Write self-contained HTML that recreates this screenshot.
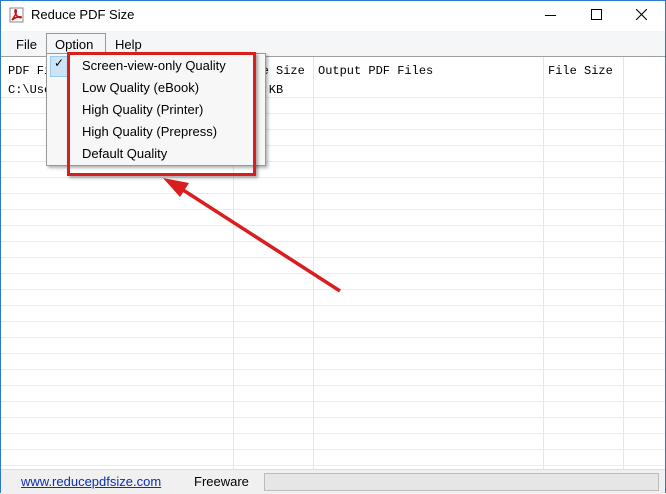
<!DOCTYPE html><html><head><style>
body{margin:0;width:666px;height:493px;overflow:hidden;background:#fff;font-family:"Liberation Sans",sans-serif;position:relative}
.a{position:absolute}
.mono{font-family:"Liberation Mono",monospace;font-size:12px;color:#000}
.menu{font-size:13px;color:#000}
</style></head><body>
<div class="a" style="left:0;top:0;width:1px;height:493px;background:#2b79c9"></div>
<div class="a" style="right:0;top:0;width:1px;height:493px;background:#2b79c9"></div>
<div class="a" style="left:0;top:0;width:666px;height:1px;background:#2b79c9"></div>
<svg class="a" style="left:9px;top:7px" width="16" height="16"><rect x="1" y="1" width="13" height="14" fill="#fff" stroke="#888"/><path d="M3 13 C6 9 8 5 7 3 C6 2 5 5 8 9 C10 11 13 11 12 10 C10 9 6 11 3 13Z" fill="none" stroke="#c8141c" stroke-width="1.6"/></svg>
<div class="a" style="left:31px;top:7px;font-size:13px;color:#000">Reduce PDF Size</div>
<div class="a" style="left:545px;top:15px;width:11px;height:1px;background:#000"></div>
<div class="a" style="left:591px;top:9px;width:9px;height:9px;border:1px solid #000"></div>
<svg class="a" style="left:636px;top:9px" width="11" height="11"><path d="M0 0L11 11M11 0L0 11" stroke="#000" stroke-width="1.1"/></svg>
<div class="a" style="left:1px;top:31px;width:664px;height:25px;background:#f5f6f7;border-bottom:1px solid #a0a0a0"></div>
<div class="a menu" style="left:16px;top:37px">File</div>
<div class="a" style="left:46px;top:33px;width:58px;height:22px;border:1px solid #999;border-bottom:none;background:#f5f6f7"></div>
<div class="a menu" style="left:55px;top:37px">Option</div>
<div class="a menu" style="left:115px;top:37px">Help</div>
<div class="a" style="left:1px;top:97px;width:664px;height:373px;background:repeating-linear-gradient(to bottom,#ececec 0 1px,transparent 1px 16px)"></div>
<div class="a" style="left:233px;top:57px;width:1px;height:413px;background:#e6e6e6"></div>
<div class="a" style="left:313px;top:57px;width:1px;height:413px;background:#e6e6e6"></div>
<div class="a" style="left:543px;top:57px;width:1px;height:413px;background:#e6e6e6"></div>
<div class="a" style="left:623px;top:57px;width:1px;height:413px;background:#e6e6e6"></div>
<div class="a mono" style="left:8px;top:64px">PDF Files</div>
<div class="a mono" style="left:8px;top:83px">C:\Users</div>
<div class="a mono" style="left:240px;top:64px">File Size</div>
<div class="a mono" style="left:240px;top:83px">123 KB</div>
<div class="a mono" style="left:318px;top:64px">Output PDF Files</div>
<div class="a mono" style="left:548px;top:64px">File Size</div>
<div class="a" style="left:46px;top:53px;width:218px;height:111px;background:#f7f7f7;border:1px solid #999;box-shadow:2px 2px 3px rgba(0,0,0,.3)"></div>
<div class="a" style="left:50px;top:56px;width:16px;height:19px;background:#cce4f7;border:1px solid #99c9ef"></div>
<div class="a" style="left:54px;top:56px;font-size:12px">✓</div>
<div class="a menu" style="left:82px;top:58px">Screen-view-only Quality</div>
<div class="a menu" style="left:82px;top:80px">Low Quality (eBook)</div>
<div class="a menu" style="left:82px;top:102px">High Quality (Printer)</div>
<div class="a menu" style="left:82px;top:124px">High Quality (Prepress)</div>
<div class="a menu" style="left:82px;top:146px">Default Quality</div>
<div class="a" style="left:67px;top:52px;width:183px;height:118px;border:3px solid #d81e1e;box-shadow:2px 2px 3px rgba(0,0,0,.35)"></div>
<svg class="a" style="left:0;top:0" width="666" height="493"><path d="M340 291L180 188" stroke="#d81e1e" stroke-width="3.5"/><path d="M163 178L189 183L180 197Z" fill="#d81e1e"/></svg>
<div class="a" style="left:1px;top:469px;width:664px;height:24px;background:#f0f0f0;border-top:1px solid #dcdcdc"></div>
<div class="a" style="left:21px;top:474px;font-size:13px;color:#0b2fb5;text-decoration:underline">www.reducepdfsize.com</div>
<div class="a" style="left:194px;top:474px;font-size:13px">Freeware</div>
<div class="a" style="left:264px;top:473px;width:393px;height:16px;background:#e6e6e6;border:1px solid #bcbcbc"></div>
</body></html>
